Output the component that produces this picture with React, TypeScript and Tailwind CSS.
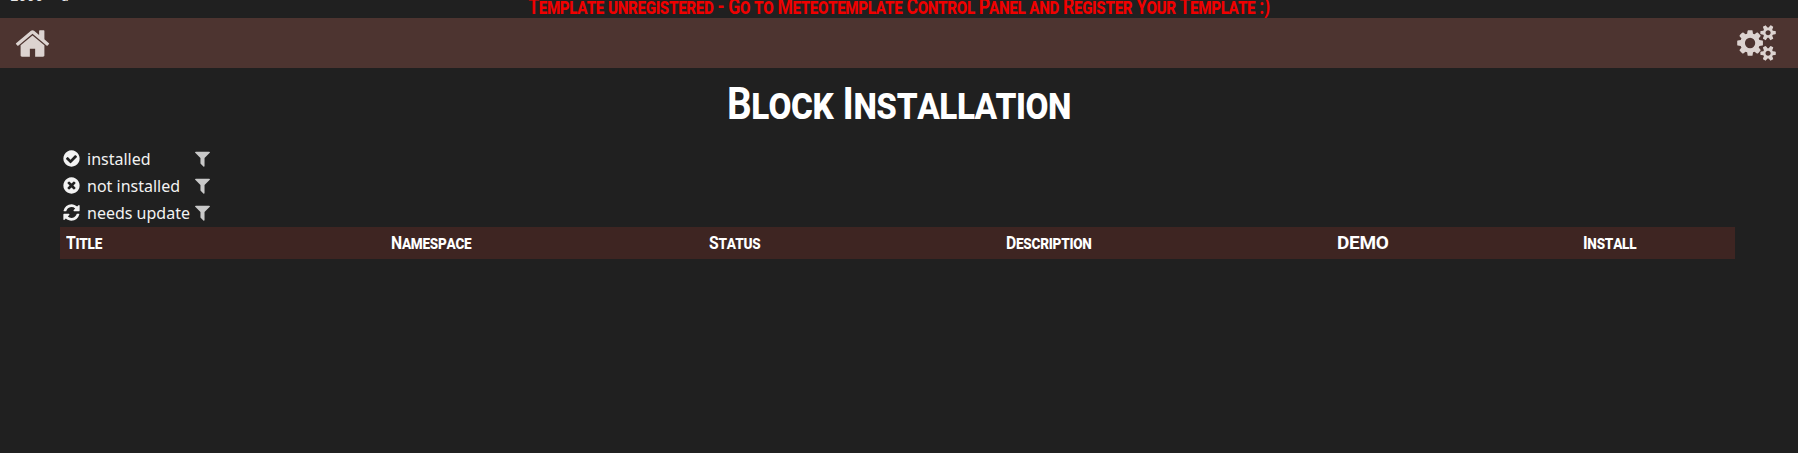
const icons = {
  home: 'M1472 992v480q0 26-19 45t-45 19h-384v-384h-256v384h-384q-26 0-45-19t-19-45v-480q0-1 .5-3t.5-3l575-474 575 474q1 2 1 6zm223-69l-62 74q-8 9-21 11h-3q-13 0-21-7l-692-577-692 577q-12 8-24 7-13-2-21-11l-62-74q-8-10-7-23.5t11-21.5l719-599q32-26 76-26t76 26l244 204v-195q0-14 9-23t23-9h192q14 0 23 9t9 23v408l219 182q10 8 11 21.5t-7 23.5z',
  cogs: 'M832 896q0-106-75-181t-181-75-181 75-75 181 75 181 181 75 181-75 75-181zm768 512q0-52-38-90t-90-38-90 38-38 90q0 53 37.5 90.5t90.5 37.5 90.5-37.5 37.5-90.5zm0-1024q0-52-38-90t-90-38-90 38-38 90q0 53 37.5 90.5t90.5 37.5 90.5-37.5 37.5-90.5zm-384 421v185q0 10-7 19.5t-16 10.5l-155 24q-11 35-32 76 34 48 90 115 7 11 7 20 0 12-7 19-23 30-82.5 89.5t-78.5 59.5q-11 0-21-7l-115-90q-37 19-77 31-11 108-23 155-7 24-30 24h-186q-11 0-20-7.5t-10-17.5l-23-153q-34-10-75-31l-118 89q-7 7-20 7-11 0-21-8-144-133-144-160 0-9 7-19 10-14 41-53t47-61q-23-44-35-82l-152-24q-10-1-17-9.5t-7-19.5v-185q0-10 7-19.5t16-10.5l155-24q11-35 32-76-34-48-90-115-7-11-7-20 0-12 7-20 22-30 82-89t79-59q11 0 21 7l115 90q34-18 77-32 11-108 23-154 7-24 30-24h186q11 0 20 7.5t10 17.5l23 153q34 10 75 31l118-89q8-7 20-7 11 0 21 8 144 133 144 160 0 8-7 19-12 16-42 54t-45 60q23 48 34 82l152 23q10 2 17 10.5t7 19.5zm640 533v140q0 16-149 31-12 27-30 52 51 113 51 138 0 4-4 7-122 71-124 71-8 0-46-47t-52-68q-20 2-30 2t-30-2q-14 21-52 68t-46 47q-2 0-124-71-4-3-4-7 0-25 51-138-18-25-30-52-149-15-149-31v-140q0-16 149-31 13-29 30-52-51-113-51-138 0-4 4-7 4-2 35-20t59-34 30-16q8 0 46 46.5t52 67.5q20-2 30-2t30 2q51-71 92-112l6-2q4 0 124 70 4 3 4 7 0 25-51 138 17 23 30 52 149 15 149 31zm0-1024v140q0 16-149 31-12 27-30 52 51 113 51 138 0 4-4 7-122 71-124 71-8 0-46-47t-52-68q-20 2-30 2t-30-2q-14 21-52 68t-46 47q-2 0-124-71-4-3-4-7 0-25 51-138-18-25-30-52-149-15-149-31v-140q0-16 149-31 13-29 30-52-51-113-51-138 0-4 4-7 4-2 35-20t59-34 30-16q8 0 46 46.5t52 67.5q20-2 30-2t30 2q51-71 92-112l6-2q4 0 124 70 4 3 4 7 0 25-51 138 17 23 30 52 149 15 149 31z',
  check: 'M1412 734q0-28-18-46l-91-90q-19-19-45-19t-45 19l-408 407-226-226q-19-19-45-19t-45 19l-91 90q-18 18-18 46 0 27 18 45l362 362q19 19 45 19 27 0 46-19l543-543q18-18 18-45zm252 162q0 209-103 385.5t-279.5 279.5-385.5 103-385.5-103-279.5-279.5-103-385.5 103-385.5 279.5-279.5 385.5-103 385.5 103 279.5 279.5 103 385.5z',
  times: 'M1277 1122q0-26-19-45l-181-181 181-181q19-19 19-45 0-27-19-46l-90-90q-19-19-46-19-26 0-45 19l-181 181-181-181q-19-19-45-19-27 0-46 19l-90 90q-19 19-19 46 0 26 19 45l181 181-181 181q-19 19-19 45 0 27 19 46l90 90q19 19 46 19 26 0 45-19l181-181 181 181q19 19 45 19 27 0 46-19l90-90q19-19 19-46zm387-226q0 209-103 385.5t-279.5 279.5-385.5 103-385.5-103-279.5-279.5-103-385.5 103-385.5 279.5-279.5 385.5-103 385.5 103 279.5 279.5 103 385.5z',
  refresh: 'M1639 1056q0 5-1 7-64 268-268 434.5t-478 166.5q-146 0-282.5-55t-243.5-157l-129 129q-19 19-45 19t-45-19-19-45v-448q0-26 19-45t45-19h448q26 0 45 19t19 45-19 45l-137 137q71 66 161 102t187 36q134 0 250-65t186-179q11-17 53-117 8-23 30-23h192q13 0 22.5 9.5t9.5 22.5zm25-800v448q0 26-19 45t-45 19h-448q-26 0-45-19t-19-45 19-45l138-138q-148-137-349-137-134 0-250 65t-186 179q-11 17-53 117-8 23-30 23h-199q-13 0-22.5-9.5t-9.5-22.5v-7q65-268 270-434.5t480-166.5q146 0 284 55.5t245 156.5l130-129q19-19 45-19t45 19 19 45z',
  filter: 'M1595 295q17 41-14 70l-493 493v742q0 42-39 59-13 5-25 5-27 0-45-19l-256-256q-19-19-19-45v-486l-493-493q-31-29-14-70 17-39 59-39h1280q42 0 59 39z',
};

function Icon({ d, className, viewBox = '0 0 1792 1792' }: { d: string; className: string; viewBox?: string }) {
  return (
    <svg viewBox={viewBox} fill="currentColor" className={className}>
      <path d={d} />
    </svg>
  );
}

const filters = [
  { label: 'installed', icon: icons.check },
  { label: 'not installed', icon: icons.times },
  { label: 'needs update', icon: icons.refresh },
];

const columns = [
  { label: 'Title', width: 'w-[325px]' },
  { label: 'Namespace', width: 'w-[318px]' },
  { label: 'Status', width: 'w-[297px]' },
  { label: 'Description', width: 'w-[331px]' },
  { label: 'DEMO', width: 'w-[246px]' },
  { label: 'Install', width: 'w-[140px]' },
];

export default function App() {
  return (
    <div className="h-[453px] w-full overflow-hidden bg-[#202020] font-['Noto_Sans',sans-serif] text-white">
      <div className="relative h-[18px] overflow-hidden">
        <span className="absolute left-[10px] top-[-13px] font-['Liberation_Mono',monospace] text-sm text-[#e8e8e8]">1999 &nbsp;d</span>
        <div className="scale-x-[0.8] whitespace-nowrap text-center font-['Roboto',sans-serif] text-[22px] font-bold leading-[14px] tracking-[-0.4px] text-[#f00000] [font-variant:small-caps]">
          Template unregistered - Go to Meteotemplate Control Panel and Register Your Template :)
        </div>
      </div>

      <header className="flex h-[50px] items-center justify-between bg-[#4d3430] pl-[14px] pr-[22px] text-[#dcd3d0]">
        <Icon d={icons.home} className="h-[37px] w-[37px]" />
        <Icon d={icons.cogs} viewBox="-64 0 1920 1792" className="h-[36px] w-[39px]" />
      </header>

      <h1 className="mt-[10px] scale-x-[0.86] text-center font-['Roboto',sans-serif] text-[45px] font-bold leading-[52px] tracking-[-0.5px] [font-variant:small-caps]">
        Block Installation
      </h1>

      <div className="mt-[15px] pl-[62px]">
        {filters.map(({ label, icon }) => (
          <div key={label} className="flex h-[27px] items-center text-[16px] text-[#f2f2f2]">
            <Icon d={icon} className="h-[19px] w-[19px] shrink-0" />
            <span className="ml-[6px] w-[106px] whitespace-nowrap">{label}</span>
            <Icon d={icons.filter} className="h-[19px] w-[19px] text-[#c9c9c9]" />
          </div>
        ))}
      </div>

      <div className="mx-[60px] mt-[1px] flex h-[32px] w-[1675px] items-center bg-[#3e2522] pl-[6px] font-['Roboto',sans-serif] text-[19px] font-bold tracking-[-0.3px] [font-variant:small-caps]">
        {columns.map((c) => (
          <div key={c.label} className={c.width}>
            <span className={c.label === 'DEMO' ? 'inline-block' : 'inline-block origin-left scale-x-[0.83]'}>{c.label}</span>
          </div>
        ))}
      </div>
    </div>
  );
}
